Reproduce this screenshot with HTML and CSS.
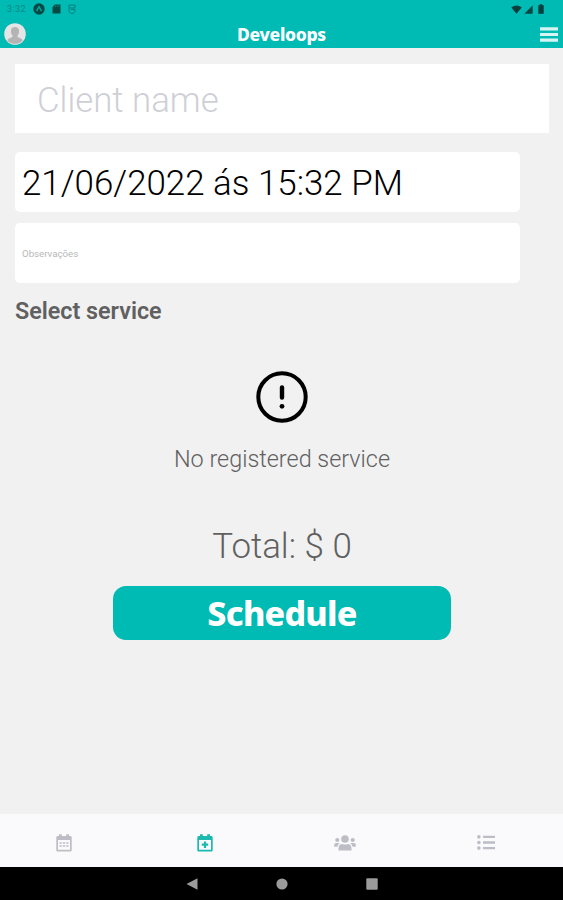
FILE: index.html
```html
<!DOCTYPE html>
<html lang="en">
<head>
  <meta charset="UTF-8" />
  <title>Develoops</title>
  <meta name="viewport" content="width=device-width, initial-scale=1" />
  <link rel="stylesheet" href="styles.css">
</head>
<body>
  <div class="app">
    <header class="header">
      <div class="status-bar">
        <div class="status-group">
          <span class="clock">3:32</span>
          <svg class="status-app" viewBox="0 0 12 12"><circle cx="6" cy="6" r="5.7" fill="#064844"/><path d="M3.5 8.2 6 3.7l2.5 4.5" fill="none" stroke="#00a9a3" stroke-width="1.4"/></svg>
          <svg class="status-sd" viewBox="0 0 9 10"><path d="M3 .5h5.5v9h-8V3z" fill="#064844"/><path d="M3.5 1.5v1.5M5.2 1.5v1.5M6.9 1.5v1.5" stroke="#00a39c" stroke-width=".6"/></svg>
          <svg class="status-usb" viewBox="0 0 8 11"><path d="M1 1h6v3H1zM1 4v3.5l3 2.5 3-2.5V5.5H3" fill="none" stroke="#08817c" stroke-width="1"/></svg>
        </div>
        <div class="status-group status-right">
          <svg class="status-wifi" viewBox="0 0 11 9"><path d="M.3 2.5Q5.5-1.3 10.7 2.5L5.5 8.8z" fill="#063f3d"/></svg>
          <svg class="status-signal" viewBox="0 0 9 9"><path d="M8.7.3v8.5H.3z" fill="#064844"/></svg>
          <svg class="status-battery" viewBox="0 0 6 10"><path d="M1.7.3h2.6v1h1.4v8.4H.3V1.3h1.4z" fill="#063f3d"/></svg>
        </div>
      </div>
      <div class="title-bar">
        <svg class="avatar" viewBox="0 0 22 22"><circle cx="11" cy="11" r="10.8" fill="#e5e5e5"/><path d="M3.5 17.7c.3-2.5 2.8-2.7 5-3.7v-1.5C6.900 11 7 9 7 7.500 7 5.200 8.600 3.900 11 3.900s4 1.300 4 3.600c0 1.500.1 3.500-1.500 5V14c2.200 1 4.700 1.200 5 3.700-3.800 4.200-11.200 4.200-15 0z" fill="#b4b4b4"/></svg>
        <span class="title">Develoops</span>
        <svg class="menu" viewBox="0 0 18 15"><path d="M0 1.800h18M0 7.500h18M0 13.200h18" stroke="#d5f5f3" stroke-width="3.200"/></svg>
      </div>
    </header>

    <main class="content">
      <div class="field field-client"><span class="placeholder">Client name</span></div>
      <div class="field field-date"><span class="date">21/06/2022 ás 15:32 PM</span></div>
      <div class="field field-notes"><span class="notes">Observações</span></div>
      <h2 class="section-title">Select service</h2>
      <div class="empty">
        <svg class="empty-icon" viewBox="0 0 52 52"><circle cx="26" cy="26" r="23.700" fill="none" stroke="#000" stroke-width="4"/><path d="M26 16.500v10" stroke="#000" stroke-width="4.400" stroke-linecap="round"/><circle cx="26" cy="35.300" r="2.400"/></svg>
        <span class="empty-text">No registered service</span>
      </div>
      <div class="total"><span class="total-text">Total: $ 0</span></div>
      <button class="schedule-btn"><span class="schedule-text">Schedule</span></button>
    </main>

    <nav class="tabs">
      <a class="tab">
        <svg class="icon-calendar" viewBox="0 0 16 18"><path d="M1.800 2H3V.3h2.800V2h4.400V.3H13V2h1.200c1 0 1.500.6 1.500 1.500V16c0 1-.6 1.500-1.500 1.500H1.800C.8 17.500.3 17 .3 16V3.500C.3 2.600.8 2 1.800 2zM2 6v9.800h12V6z" fill="currentColor" fill-rule="evenodd"/><path d="M3.500 9h9M3.500 12h9" stroke="currentColor" stroke-width="1.700" stroke-dasharray="2.300 1.050"/></svg>
      </a>
      <a class="tab active">
        <svg class="icon-calendar" viewBox="0 0 16 18"><path d="M1.800 2H3V.3h2.800V2h4.400V.3H13V2h1.200c1 0 1.500.6 1.500 1.500V16c0 1-.6 1.500-1.500 1.500H1.800C.8 17.500.3 17 .3 16V3.500C.3 2.600.8 2 1.800 2zM2 6v9.800h12V6z" fill="currentColor" fill-rule="evenodd"/><path d="M4.800 10.700h6.400M8 7.500v6.400" stroke="currentColor" stroke-width="2.200"/></svg>
      </a>
      <a class="tab">
        <svg class="icon-users" viewBox="0 0 22 16" fill="currentColor"><circle cx="11" cy="4" r="3.800"/><circle cx="3.300" cy="5" r="2.100"/><circle cx="18.700" cy="5" r="2.100"/><path d="M4.500 15.500v-2.300c0-2.600 1.600-4.200 3.800-4.200 1.700.7 3.700.7 5.400 0 2.200 0 3.800 1.600 3.800 4.200v2.300zM.2 11.700V10.200C.2 8.800 1 8 2.300 8h2c.6 0 1 .2 1.400.5-1.300.8-2 1.800-2.300 3.200zM21.800 11.700v-1.500C21.800 8.800 21 8 19.700 8h-2c-.6 0-1 .2-1.400.5 1.300.8 2 1.800 2.300 3.200z"/></svg>
      </a>
      <a class="tab">
        <svg class="icon-list" viewBox="0 0 18 15"><path d="M6 1.900h12M6 7.500h12M6 13.100h12" stroke="currentColor" stroke-width="2.300"/><g fill="currentColor"><circle cx="1.900" cy="1.900" r="1.800"/><circle cx="1.900" cy="7.500" r="1.800"/><circle cx="1.900" cy="13.100" r="1.800"/></g></svg>
      </a>
    </nav>

    <!-- android buttons -->
    <div class="system-nav">
      <svg class="sys-icon" viewBox="0 0 12 12"><path d="M11.500.2v11.600L.5 6z"/></svg>
      <svg class="sys-icon" viewBox="0 0 12 12"><circle cx="6" cy="6" r="5.600"/></svg>
      <svg class="sys-icon" viewBox="0 0 12 12"><rect x=".3" y=".3" width="11.400" height="11.400" rx="1"/></svg>
    </div>
  </div>
</body>
</html>
```
FILE: styles.css
```css
* { box-sizing: border-box; }
body { margin: 0; background: #f1f1f1; font-family: Roboto, sans-serif; color: #606060; }
svg { display: block; flex: none; }
.app { display: flex; flex-direction: column; height: 900px; overflow: hidden; }

/* header */
.header { height: 48px; background: #00bab4; }
.status-bar { display: flex; justify-content: space-between; height: 18px; padding: 0 19px 0 7px; }
.status-group { display: flex; align-items: center; }
.clock { width: 26px; font-size: 9px; letter-spacing: 0.4px; color: #078984; }
.status-app { width: 12px; height: 12px; }
.status-sd { width: 9px; height: 10px; margin-left: 7px; }
.status-usb { width: 8px; height: 11px; margin-left: 7px; }
.status-right { gap: 2px; }
.status-wifi { width: 11px; height: 9px; }
.status-signal { width: 9px; height: 9px; }
.status-battery { width: 6px; height: 10px; margin-left: 3px; }
.title-bar { display: flex; align-items: center; justify-content: space-between; height: 32px; padding: 0 5px 0 4px; }
.avatar { width: 22px; height: 22px; }
.title { margin-right: 3px; font: 800 17.5px/24px "Noto Sans", sans-serif; letter-spacing: -0.3px; color: #fff; }
.menu { width: 18px; height: 15px; }

/* form */
.content { flex: 1; display: flex; flex-direction: column; padding: 16px 14px 0 15px; }
.field { display: flex; align-items: center; background: #fff; white-space: nowrap; }
.field-client { height: 69px; padding: 3px 0 0 22px; font-size: 34.8px; font-weight: 350; color: #ced0d6; }
.field-date { width: 505px; height: 60px; margin-top: 19px; padding: 2px 0 0 7px; border-radius: 5px; font-size: 34.9px; font-weight: 330; color: #000; }
.field-notes { width: 505px; height: 60px; margin-top: 11px; padding-left: 7px; border-radius: 5px; font-size: 9.7px; color: #b8b8b8; }
.section-title { margin: 14px 0 0; font-size: 23.3px; line-height: 28px; font-weight: 600; color: #606060; }
.empty { display: flex; flex-direction: column; align-items: center; margin-top: 46px; }
.empty-icon { width: 52px; height: 52px; }
.empty-text { margin-top: 22px; font-size: 23.4px; line-height: 28px; font-weight: 350; }
.total { margin-top: 53px; text-align: center; font-size: 34.9px; line-height: 42px; font-weight: 340; }
.schedule-btn { align-self: center; display: flex; align-items: center; justify-content: center; width: 338px; height: 54px; margin-top: 18px; padding: 0; border: none; border-radius: 13px; background: #00bab4; color: #fff; font: 800 34px/40px "Noto Sans", sans-serif; letter-spacing: -0.75px; }

/* bottom tabs */
.tabs { display: flex; height: 53px; background: #fafafd; }
.tab { flex: 1; display: flex; align-items: center; justify-content: center; padding-top: 4px; padding-right: 13px; color: #bdbdc6; }
.tab.active { color: #1db8ae; }
.icon-calendar { width: 16px; height: 18px; }
.icon-users { width: 22px; height: 16px; }
.icon-list { width: 18px; height: 15px; }
.system-nav { display: flex; align-items: center; justify-content: center; gap: 78px; height: 33px; background: #000; fill: #9b9b9b; }
.sys-icon { width: 12px; height: 12px; }
```
